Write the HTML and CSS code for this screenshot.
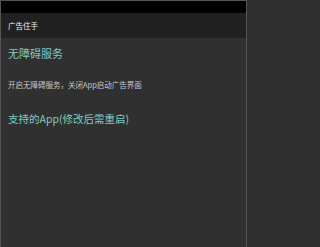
FILE: index.html
```html
<!DOCTYPE html>
<html>
<head>
<meta charset="utf-8">
<link rel="stylesheet" href="styles.css">
</head>
<body>
<div class="screen">
  <div class="status"></div>
  <div class="toolbar"><span class="title">广告住手</span></div>
  <div class="content">
    <div class="cat">无障碍服务</div>
    <div class="summary">开启无障碍服务，关闭App启动广告界面</div>
    <div class="cat cat2">支持的App(修改后需重启)</div>
  </div>
</div>
</body>
</html>
```
FILE: styles.css
```css
html, body {
  margin: 0;
  padding: 0;
  height: 247px;
  overflow: hidden;
  background: #303030;
}
.screen {
  box-sizing: border-box;
  width: 247px;
  height: 247px;
  border: 1px solid #555;
  border-bottom: none;
  display: flex;
  flex-direction: column;
  font-family: "Noto Sans CJK SC", "Roboto", sans-serif;
}
.status {
  height: 12px;
  background: #000;
}
.toolbar {
  height: 25px;
  background: #212121;
  display: flex;
  align-items: center;
  padding-left: 7px;
}
.title {
  color: #eeeeee;
  font-size: 7.5px;
}
.content {
  flex: 1;
  background: #303030;
  padding: 0 7px;
}
.cat {
  color: #80cbc4;
  font-size: 11px;
  line-height: 14px;
  margin-top: 8px;
}
.summary {
  color: #c8c8c8;
  font-size: 7.5px;
  line-height: 10px;
  margin-top: 20px;
}
.cat2 {
  font-size: 10.5px;
  margin-top: 22px;
}
```
